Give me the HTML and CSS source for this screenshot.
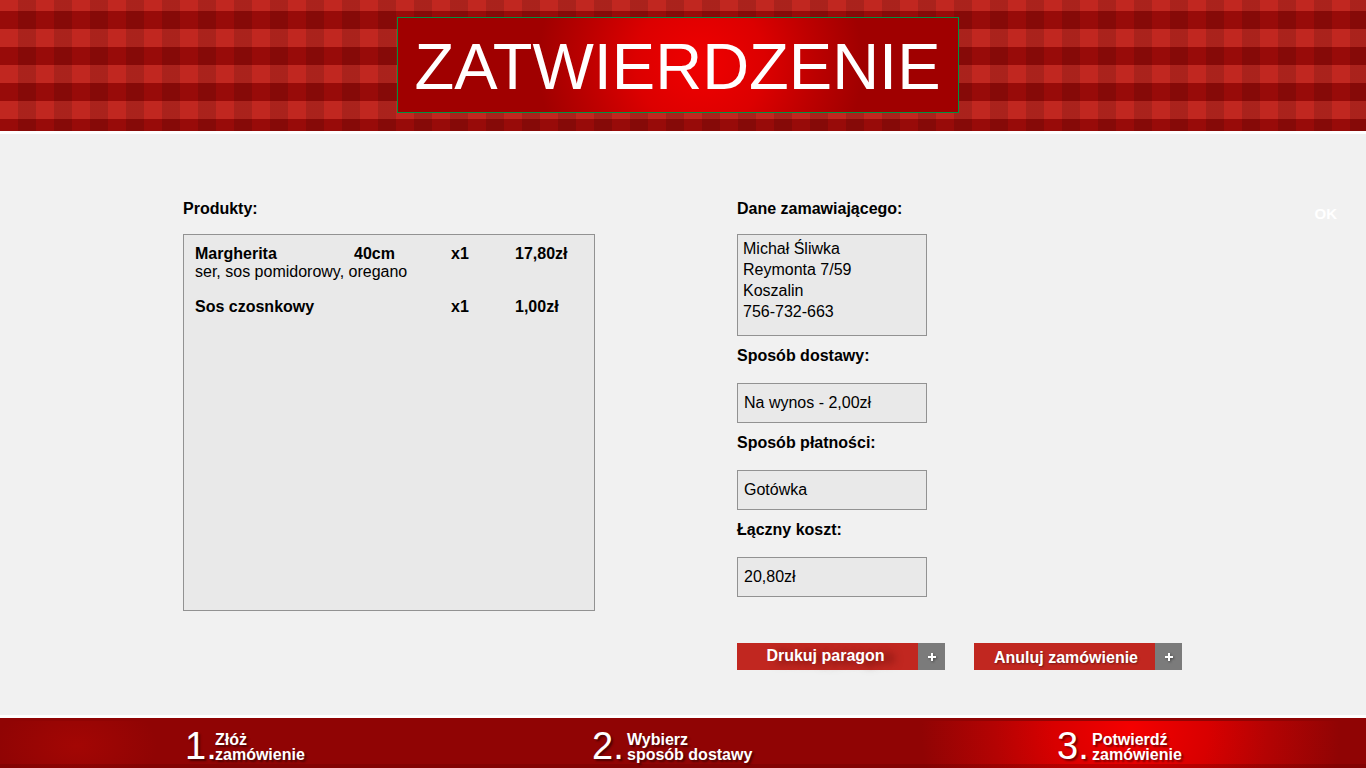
FILE: index.html
```
<!DOCTYPE html>
<html lang="pl">
<head>
<meta charset="utf-8">
<title>Zatwierdzenie</title>
<link rel="stylesheet" href="styles.css">
</head>
<body>
<header class="banner">
  <h1 class="banner-title">ZATWIERDZENIE</h1>
</header>
<main class="order">
  <section class="products">
    <h2 class="heading">Produkty:</h2>
    <div class="panel product-panel">
      <table class="product-table">
        <colgroup><col class="col-name"><col class="col-size"><col class="col-count"><col></colgroup>
        <tbody>
          <tr><td>Margherita</td><td>40cm</td><td>x1</td><td>17,80zł</td></tr>
          <tr class="ingredients"><td colspan="4">ser, sos pomidorowy, oregano</td></tr>
        </tbody>
        <tbody class="next-product">
          <tr><td>Sos czosnkowy</td><td></td><td>x1</td><td>1,00zł</td></tr>
        </tbody>
      </table>
    </div>
  </section>
  <section class="details">
    <h2 class="heading">Dane zamawiającego:</h2>
    <address class="panel customer">Michał Śliwka<br>Reymonta 7/59<br>Koszalin<br>756-732-663</address>
    <h2 class="heading sub">Sposób dostawy:</h2>
    <p class="panel value">Na wynos - 2,00zł</p>
    <h2 class="heading sub">Sposób płatności:</h2>
    <p class="panel value">Gotówka</p>
    <h2 class="heading sub">Łączny koszt:</h2>
    <p class="panel value">20,80zł</p>
    <div class="actions">
      <button class="action print" type="button"><span class="action-label">Drukuj paragon</span><span class="action-plus"><svg width="8" height="8" viewBox="0 0 8 8" aria-hidden="true"><path d="M3 0h2v3h3v2H5v3H3V5H0V3h3z"/></svg></span></button>
      <button class="action cancel" type="button"><span class="action-label">Anuluj zamówienie</span><span class="action-plus"><svg width="8" height="8" viewBox="0 0 8 8" aria-hidden="true"><path d="M3 0h2v3h3v2H5v3H3V5H0V3h3z"/></svg></span></button>
    </div>
  </section>
  <button class="ok" type="button">OK</button>
</main>
<footer class="footer">
  <ol class="steps">
    <li class="step first"><span class="number">1.</span><span class="step-label">Złóż<br>zamówienie</span></li>
    <li class="step"><span class="number">2.</span><span class="step-label">Wybierz<br>sposób dostawy</span></li>
    <li class="step" aria-current="step"><span class="number">3.</span><span class="step-label">Potwierdź<br>zamówienie</span></li>
  </ol>
</footer>
</body>
</html>
```
FILE: styles.css
```
* { box-sizing: border-box; }

body {
  margin: 0;
  min-height: 100vh;
  display: flex;
  flex-direction: column;
  background: #f1f1f1;
  color: #000;
  font: 16px/20px "Liberation Sans", Arial, sans-serif;
}

h1, h2, p, ol { margin: 0; padding: 0; }

.banner {
  display: flex;
  justify-content: center;
  padding: 17px 11px 18px 0;
  border-bottom: 3px solid #fff;
  background:
    repeating-linear-gradient(90deg, transparent 0 18px, rgba(0, 0, 0, .12) 18px 36px),
    repeating-linear-gradient(180deg, transparent 0 18px, #980b09 18px 36px) 0 -7px / 100% 144px,
    #c12720;
}

.banner-title {
  padding: 13px 17px 9px;
  border: 1px solid #00913f;
  background: radial-gradient(circle 162px at 54% 48%, #f00000, #dc0000 40%, #bf0000 68%, #a00000);
  color: #fff;
  font-size: 65px;
  font-weight: 400;
  line-height: 72px;
}

.order {
  flex: 1;
  display: grid;
  grid-template-columns: 183px 412fr 142fr 445fr 184px;
  align-items: start;
  padding: 65px 0 45px;
}

.products { grid-column: 2; }
.details { grid-column: 4; }

.heading {
  margin-bottom: 15px;
  font-size: 16px;
  font-weight: 700;
  line-height: 20px;
}

.heading.sub { margin: 10px 0 17px; }

.panel {
  border: 1px solid #929292;
  background: #e9e9e9;
}

.product-panel {
  min-height: 377px;
  padding: 10px 11px;
}

.product-table {
  width: 100%;
  table-layout: fixed;
  border-collapse: collapse;
  font-weight: 700;
  line-height: 18px;
}

.product-table td { padding: 0; }
.product-table .ingredients { font-weight: 400; }
.next-product td { padding-top: 17px; }
.col-name { width: 159px; }
.col-size { width: 97px; }
.col-count { width: 64px; }

.customer {
  width: 190px;
  padding: 3px 5px 13px;
  font-style: normal;
  line-height: 21px;
}

.value {
  width: 190px;
  padding: 9px 6px;
}

.actions {
  display: grid;
  grid-template-columns: 1fr 1fr;
  gap: 29px;
  margin-top: 46px;
}

.action {
  display: flex;
  height: 27px;
  padding: 0;
  border: 0;
  background: #c12720;
  color: #fff;
  font: 700 16px/26px "Liberation Sans", Arial, sans-serif;
  cursor: pointer;
}

.action-label {
  flex: 1;
  white-space: nowrap;
  text-shadow: 1px 1px 2px rgba(0, 0, 0, .4);
}

.print .action-label {
  padding-right: 4px;
  line-height: 25px;
  text-shadow: 10px 2px 8px rgba(60, 0, 0, .6);
}

.cancel .action-label {
  padding-left: 3px;
  line-height: 29px;
}

.action-plus {
  width: 27px;
  height: 27px;
  display: flex;
  align-items: center;
  justify-content: center;
  background: #7b7b7b;
  fill: #fff;
}

.action-plus svg { filter: drop-shadow(1px 1px 1px rgba(0, 0, 0, .4)); }

.ok {
  grid-column: 5;
  justify-self: end;
  margin: 6px 29px 0 0;
  padding: 0;
  border: 0;
  background: none;
  color: #fff;
  font: 700 15px/18px "Liberation Sans", Arial, sans-serif;
}

.footer {
  border-top: 3px solid #fff;
  background:
    linear-gradient(#900404, #900404) 0 0 / 100% 3px no-repeat,
    linear-gradient(rgba(100, 0, 0, .3), rgba(100, 0, 0, .3)) 0 100% / 100% 4px no-repeat,
    radial-gradient(ellipse 80px 50px at 77px 55%, #a30604, rgba(144, 4, 4, 0)),
    radial-gradient(circle 210px at 1131px 20%, #f40000, #d80000 37%, #b40303 65%, #900404);
}

.steps {
  display: grid;
  grid-template-columns: 407fr 465fr 309fr;
  padding: 9px 0 2px 185px;
  list-style: none;
}

.step {
  display: flex;
  align-items: center;
  color: #fff;
  text-shadow: 2px 2px 2px rgba(0, 0, 0, .45);
}

.number {
  width: 35px;
  font-size: 38px;
  line-height: 39px;
}

.first .number { width: 30px; }

.step-label {
  font-weight: 700;
  line-height: 15px;
}
```
